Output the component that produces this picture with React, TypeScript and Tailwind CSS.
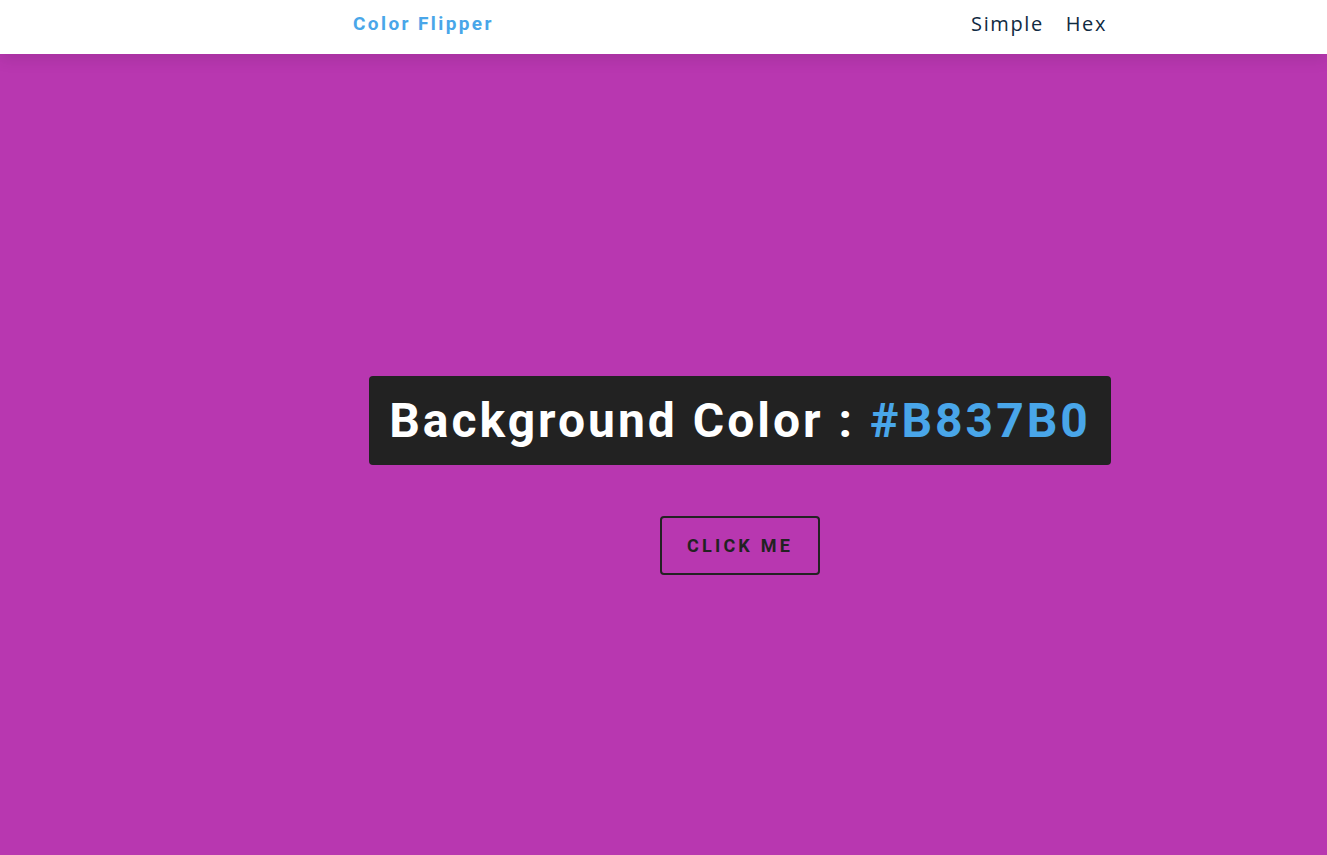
export default function App() {
  return (
    <div className="min-h-screen flex flex-col bg-[#b837b0]" style={{ fontFamily: "Roboto, 'Open Sans', sans-serif" }}>
      <nav className="h-[54px] bg-white shadow-[0_5px_15px_rgba(0,0,0,0.1)] relative z-10 flex items-center pb-[6px]">
        <div className="flex w-full items-center justify-between pl-[353px] pr-[220px]">
          <h4 className="text-[19px] font-bold tracking-[0.15rem] text-[#49a6e9] font-['Roboto']">Color Flipper</h4>
          <ul className="flex gap-[22px] font-['Open_Sans'] text-[20px] tracking-[0.1rem] text-[#102a42]">
            <li>Simple</li>
            <li>Hex</li>
          </ul>
        </div>
      </nav>
      <main className="flex-1 h-[801px] flex flex-col items-center justify-center pl-[153px] pt-[42px]">
        <h2 className="bg-[#222222] text-white rounded-[4px] px-5 h-[89px] flex items-center text-[48px] font-bold tracking-[3px] font-['Roboto']">
          Background Color :&nbsp;<span className="text-[#49a6e9]">#B837B0</span>
        </h2>
        <button className="mt-[51px] w-[160px] h-[59px] border-2 border-[#222222] rounded-[4px] text-[#222222] text-[18px] font-bold tracking-[0.2rem] uppercase font-['Roboto']">
          click me
        </button>
      </main>
    </div>
  );
}
